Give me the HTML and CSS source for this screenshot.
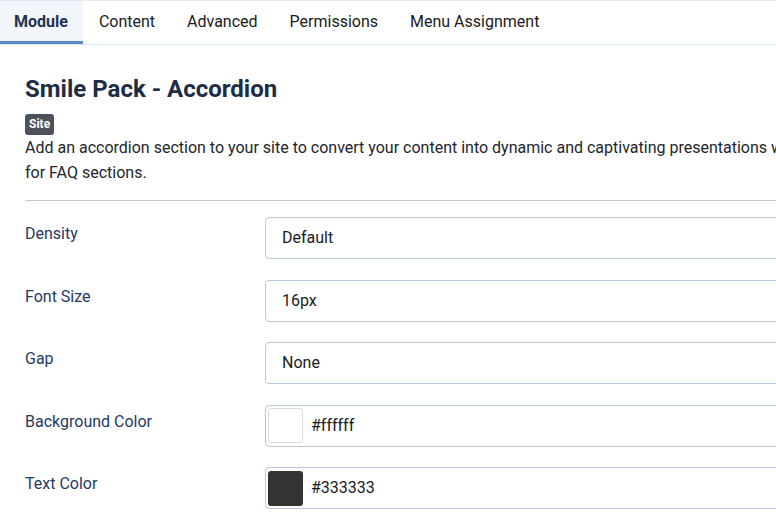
FILE: index.html
```html
<!DOCTYPE html>
<html>
<head>
<meta charset="utf-8">
<link rel="stylesheet" href="styles.css">
</head>
<body>
<div class="page">
  <nav class="tabs">
    <div class="tab active">Module</div>
    <div class="tab">Content</div>
    <div class="tab">Advanced</div>
    <div class="tab">Permissions</div>
    <div class="tab">Menu Assignment</div>
  </nav>
  <main class="content">
    <h1 class="title">Smile Pack - Accordion</h1>
    <span class="badge">Site</span>
    <p class="desc">Add an accordion section to your site to convert your content into dynamic and captivating presentations with ease, perfect<br>for FAQ sections.</p>
    <hr class="divider">
    <div class="form">
      <div class="row">
        <label class="label">Density</label>
        <div class="field"><span class="value">Default</span></div>
      </div>
      <div class="row">
        <label class="label">Font Size</label>
        <div class="field"><span class="value">16px</span></div>
      </div>
      <div class="row">
        <label class="label">Gap</label>
        <div class="field"><span class="value">None</span></div>
      </div>
      <div class="row">
        <label class="label">Background Color</label>
        <div class="field color"><span class="swatch white"></span><span class="value">#ffffff</span></div>
      </div>
      <div class="row">
        <label class="label">Text Color</label>
        <div class="field color"><span class="swatch dark"></span><span class="value">#333333</span></div>
      </div>
    </div>
  </main>
</div>
</body>
</html>
```
FILE: styles.css
```css
* { box-sizing: border-box; }
html, body { margin: 0; padding: 0; background: #fff; overflow: hidden; }
body { font-family: Roboto, "Liberation Sans", sans-serif; font-size: 16px; line-height: 1.5; color: #22262a; }
.page { width: 1000px; }
.tabs {
  display: flex;
  border-top: 1px solid #e4e9f0;
  border-bottom: 1px solid #dde5f0;
  height: 45px;
}
.tab {
  height: 43px;
  padding: 0 16px 1px;
  display: flex;
  align-items: center;
  color: #1a1a1a;
  font-size: 16px;
}
.tab.active {
  background: #f2f6fa;
  box-shadow: inset 0 -3px 0 #5a86c2;
  color: #1f3350;
  font-weight: 700;
  padding: 0 15px 1px 14px;
}
.content { padding: 0 0 0 25px; }
.title {
  margin: 0;
  padding-top: 26px;
  font-size: 24px;
  line-height: 36px;
  font-weight: 700;
  color: #1e2d45;
}
.badge {
  display: inline-block;
  margin-top: 7px;
  background: #4b525a;
  color: #fff;
  font-size: 12px;
  font-weight: 700;
  line-height: 21px;
  padding: 0 4px;
  border-radius: 3px;
  vertical-align: top;
}
.desc {
  margin: 0;
  font-size: 16px;
  line-height: 25px;
  color: #22262a;
  white-space: nowrap;
}
.divider {
  margin: 15px 0 0 0;
  border: 0;
  border-top: 1px solid #c8c8c8;
}
.form { padding-top: 16px; display: flex; flex-direction: column; gap: 20.6px; }
.row { display: flex; align-items: flex-start; }
.label {
  width: 240px;
  padding-top: 5px;
  color: #1f3a5f;
  font-size: 16px;
  line-height: 24px;
}
.field {
  flex: 1;
  height: 42px;
  border: 1px solid #b9c8dd;
  border-radius: 4px;
  display: flex;
  align-items: center;
  padding: 0 16px;
  color: #1a1a1a;
  font-size: 16px;
}
.field.color { padding: 0 0 0 2px; gap: 8px; }
.swatch {
  width: 35px;
  height: 35px;
  border-radius: 3px;
  flex: none;
}
.swatch.white { background: #fff; border: 1px solid #dcdcdc; }
.swatch.dark { background: #333333; }
```
